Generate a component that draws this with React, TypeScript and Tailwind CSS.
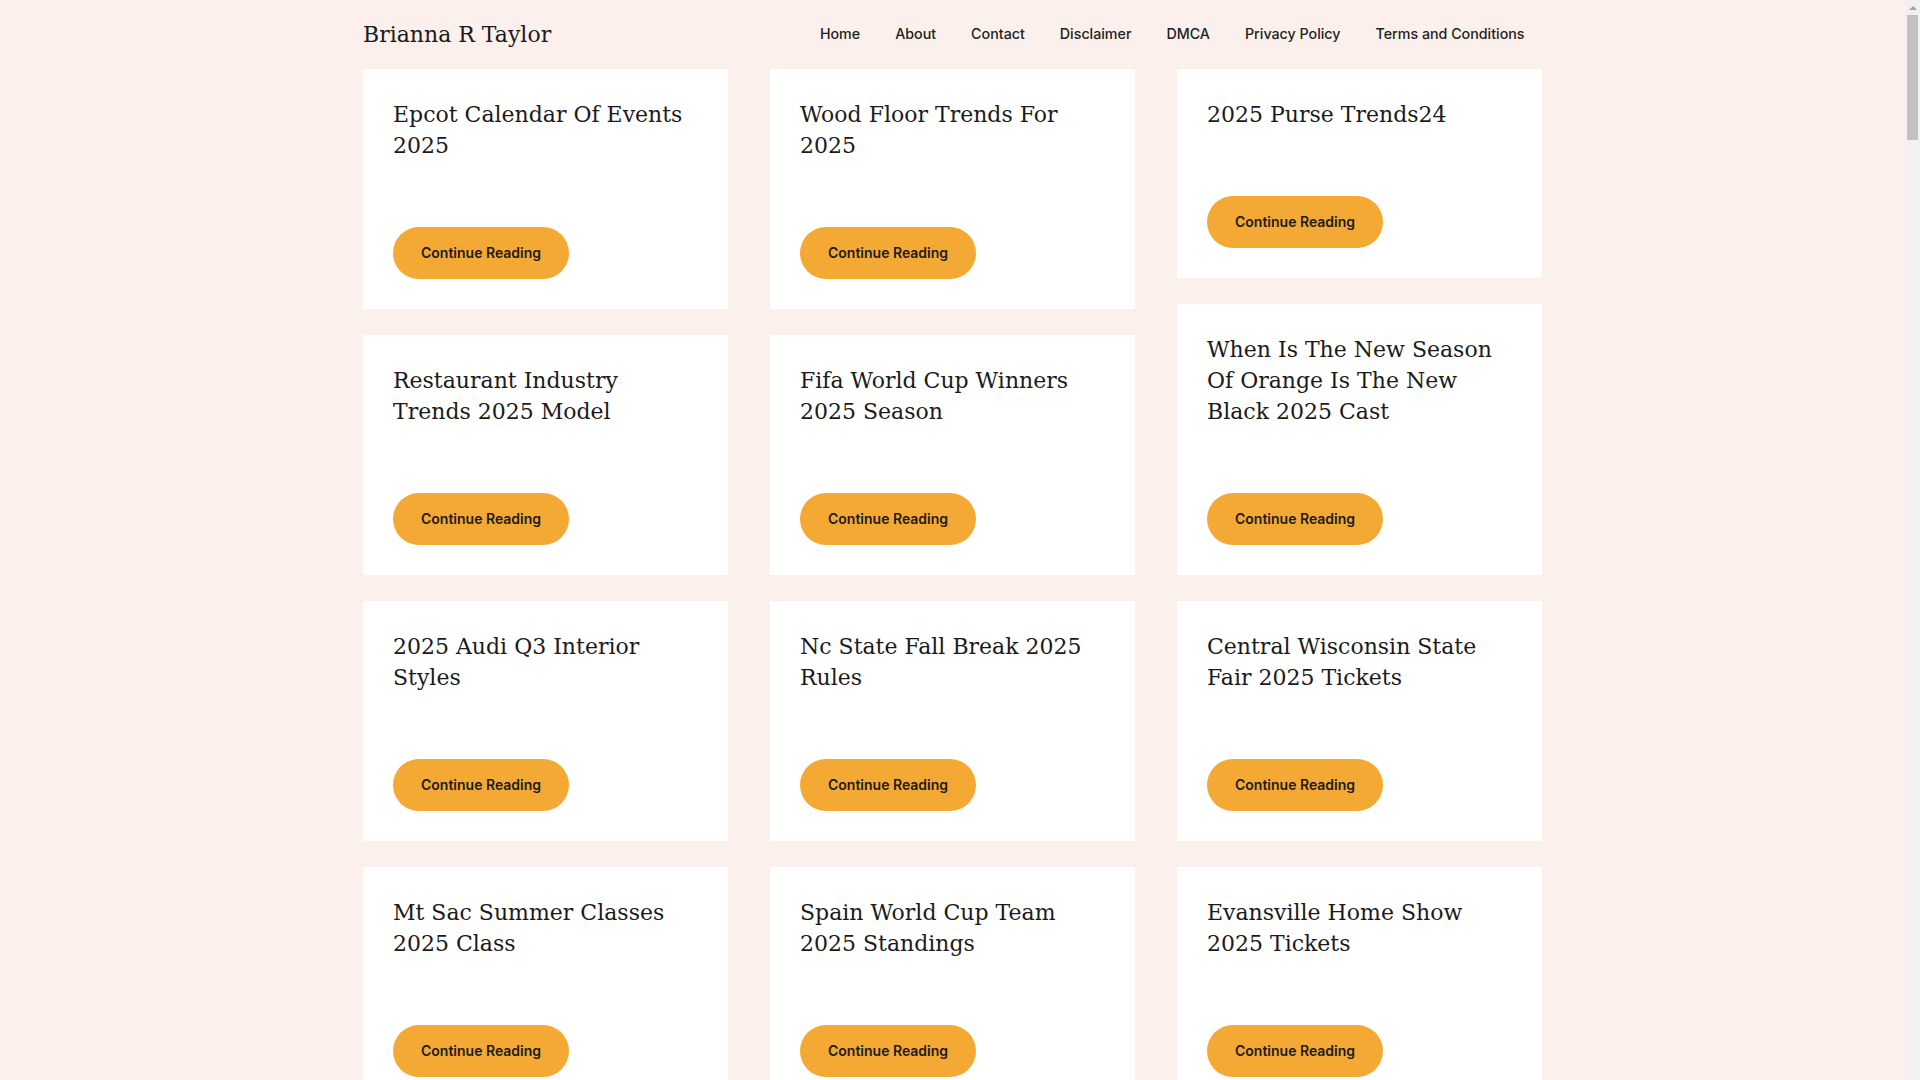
import React from "react";

const columns: string[][][] = [
  [
    ["Epcot Calendar Of Events", "2025"],
    ["Restaurant Industry", "Trends 2025 Model"],
    ["2025 Audi Q3 Interior", "Styles"],
    ["Mt Sac Summer Classes", "2025 Class"],
  ],
  [
    ["Wood Floor Trends For", "2025"],
    ["Fifa World Cup Winners", "2025 Season"],
    ["Nc State Fall Break 2025", "Rules"],
    ["Spain World Cup Team", "2025 Standings"],
  ],
  [
    ["2025 Purse Trends24"],
    ["When Is The New Season", "Of Orange Is The New", "Black 2025 Cast"],
    ["Central Wisconsin State", "Fair 2025 Tickets"],
    ["Evansville Home Show", "2025 Tickets"],
  ],
];

const navItems = ["Home", "About", "Contact", "Disclaimer", "DMCA", "Privacy Policy", "Terms and Conditions"];

function Card({ lines }: { lines: string[] }) {
  return (
    <article className="bg-white px-[30px] pt-[30px] pb-[30px]">
      <h2 className="font-['DejaVu_Serif',serif] text-[22px] leading-[31px] font-normal text-[#1b1b1b] whitespace-nowrap">
        {lines.map((l, i) => (
          <React.Fragment key={i}>
            {i > 0 && <br />}
            {l}
          </React.Fragment>
        ))}
      </h2>
      <div className="mt-[66px]">
        <a className="inline-flex h-[52px] items-center rounded-full bg-[#f5a935] px-[28px] pb-[1px] font-['Inter',sans-serif] text-[14px] font-semibold text-[#1b1b1b]">
          Continue Reading
        </a>
      </div>
    </article>
  );
}

export default function App() {
  return (
    <div className="flex h-screen overflow-hidden bg-[#fbf0eb]">
      <div className="flex-1 min-h-[8800px]">
        <div className="mx-auto w-[1179px]">
          <header className="flex h-[69px] items-center justify-between">
            <div className="font-['DejaVu_Serif',serif] text-[22px] text-[#1b1b1b]">Brianna R Taylor</div>
            <nav className="flex items-center pb-[2px]">
              {navItems.map((n) => (
                <a key={n} className="px-[17.5px] font-['Inter',sans-serif] text-[14.25px] font-medium text-[#222]">
                  {n}
                </a>
              ))}
            </nav>
          </header>
          <main className="grid grid-cols-3 gap-x-[42px] items-start">
            {columns.map((col, ci) => (
              <div key={ci} className="flex flex-col gap-[26px]">
                {col.map((lines, i) => (
                  <Card key={i} lines={lines} />
                ))}
              </div>
            ))}
          </main>
        </div>
      </div>
      <div className="flex w-[15px] shrink-0 flex-col items-center bg-[#f1f1f1]">
        <div className="flex h-[15px] w-full items-center justify-center">
          <div className="h-0 w-0 border-x-[4px] border-b-[4px] border-x-transparent border-b-[#a3a3a3]" />
        </div>
        <div className="h-[125px] w-[11px] bg-[#c1c1c1]" />
      </div>
    </div>
  );
}
